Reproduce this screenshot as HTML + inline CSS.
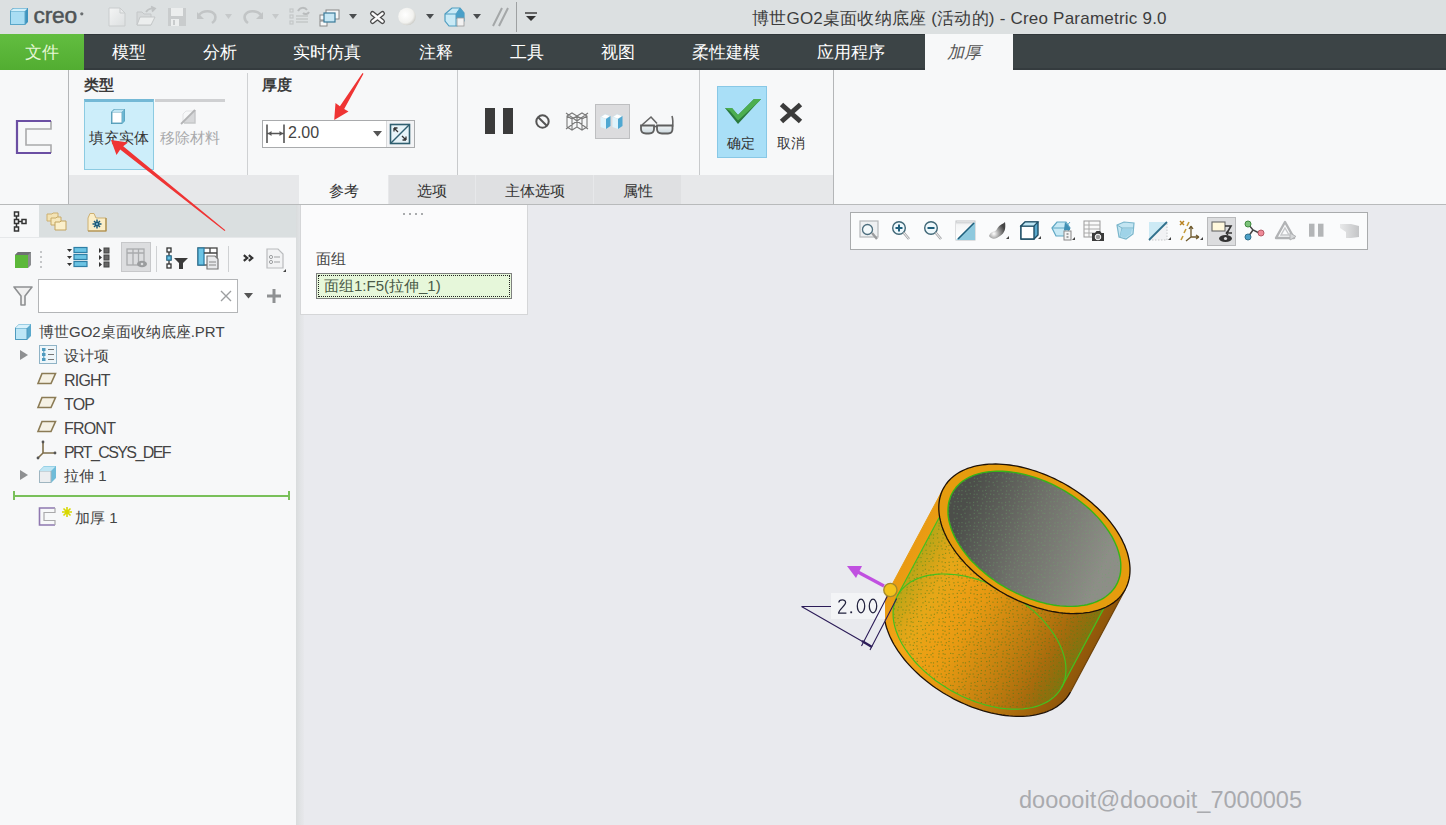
<!DOCTYPE html>
<html><head><meta charset="utf-8">
<style>
*{margin:0;padding:0;box-sizing:border-box}
html,body{width:1446px;height:825px;overflow:hidden;background:#e9eaee;font-family:"Liberation Sans",sans-serif;color:#333}
.a{position:absolute}
svg{position:absolute;overflow:visible}
#title{left:0;top:0;width:1446px;height:34px;background:#dce0e1}
#menu{left:0;top:34px;width:1446px;height:36px;background:#3c4446}
.mt{position:absolute;top:0;height:36px;line-height:37px;font-size:17px;color:#fff;white-space:nowrap}
#ribbon{left:0;top:70px;width:1446px;height:135px;background:#f7f8f9}
#left{left:0;top:205px;width:296px;height:620px;background:#f7f8f9}
.tx{position:absolute;white-space:nowrap;font-size:14px;color:#3a3a3a}
.tab{position:absolute;top:105px;height:29px;line-height:31px;text-align:center;font-size:15px;color:#333;background:#dfe0e2}
</style></head>
<body>
<!-- TITLE BAR -->
<div id="title" class="a">
  <div class="tx" style="left:752px;top:8px;font-size:17px;color:#3d3d3d;line-height:22px;letter-spacing:0.22px">博世GO2桌面收纳底座 (活动的) - Creo Parametric 9.0</div>
</div>
<!-- title toolbar -->
<svg width="560" height="34" style="left:0;top:0">
 <defs>
  <linearGradient id="gdoc" x1="0" y1="0" x2="1" y2="1"><stop offset="0" stop-color="#f4f5f5"/><stop offset="1" stop-color="#dcdfe0"/></linearGradient>
 </defs>
 <!-- creo cube -->
 <path d="M10,11 L13,8 H28 V22 L25,25 H10 Z" fill="#3e94bf"/>
 <path d="M10.5,11 H25 V24.5 H10.5 Z" fill="#a9ddf3" stroke="#5aa6c8" stroke-width="1"/>
 <path d="M10.5,11 L13.5,8.5 H27.5 L25,11 Z" fill="#d2effa"/>
 <text x="33.5" y="23.2" font-family="Liberation Sans" font-size="22.7" fill="#4f5456" stroke="#4f5456" stroke-width="0.5" letter-spacing="-0.2">creo</text>
 <circle cx="81.8" cy="13.8" r="1.6" fill="#6a6e70"/>
 <!-- new -->
 <path d="M109,8 H120 L125,13 V26 H109 Z" fill="url(#gdoc)" stroke="#c9cccd" stroke-width="1"/>
 <path d="M120,8 V13 H125" fill="none" stroke="#c9cccd" stroke-width="1"/>
 <!-- open -->
 <path d="M137,12 H142 L144,14 H151 V25 H137 Z" fill="#d6d9da" stroke="#c4c7c8" stroke-width="1"/>
 <path d="M137,25 L140,17 H155 L151,25 Z" fill="#eceeee" stroke="#c4c7c8" stroke-width="1"/>
 <path d="M146,12 C148,9 151,8 153,9 M151,6.5 L155,8.5 L152,11.5" fill="none" stroke="#c0c3c4" stroke-width="1.8"/>
 <!-- save -->
 <rect x="168" y="8" width="18" height="18" fill="#c9cccd"/>
 <rect x="171" y="8" width="12" height="8" fill="#eceeee"/>
 <rect x="171" y="19" width="8" height="7" fill="#eceeee"/>
 <rect x="173" y="20" width="2" height="5" fill="#c9cccd"/>
 <!-- undo -->
 <path d="M199,15 C203,10 212,10 215,15 C216,18 215,21 212,23" fill="none" stroke="#c2c5c6" stroke-width="2.6"/>
 <path d="M197,12 L197,19 L204,19 Z" fill="#c2c5c6"/>
 <path d="M225,14 H232 L228.5,19 Z" fill="#c6c9ca"/>
 <!-- redo -->
 <path d="M261,15 C257,10 248,10 245,15 C244,18 245,21 248,23" fill="none" stroke="#c2c5c6" stroke-width="2.6"/>
 <path d="M263,12 L263,19 L256,19 Z" fill="#c2c5c6"/>
 <path d="M272,14 H279 L275.5,19 Z" fill="#c6c9ca"/>
 <!-- regen -->
 <g fill="none" stroke="#c4c7c8" stroke-width="1.2"><rect x="290" y="9" width="3" height="3"/><rect x="290" y="15" width="3" height="3"/><rect x="290" y="21" width="3" height="3"/></g>
 <path d="M296,16 H308 M296,19 H308 M296,22 H308" stroke="#c4c7c8" stroke-width="1.4"/>
 <path d="M298,11 C300,7 305,7 307,10 M303,13 C305,15 308,14 309,12" fill="none" stroke="#b9bcbd" stroke-width="2"/>
 <!-- windows -->
 <rect x="320" y="15" width="7" height="5" fill="#f6f7f7" stroke="#888" stroke-width="1"/>
 <rect x="320" y="21" width="7" height="5" fill="#f6f7f7" stroke="#888" stroke-width="1"/>
 <rect x="326" y="10" width="13" height="9" fill="#f6f7f7" stroke="#888" stroke-width="1"/>
 <rect x="324" y="13" width="11" height="9" fill="#c7e7f4" stroke="#3a7a98" stroke-width="1.2"/>
 <path d="M349,14 H357 L353,19 Z" fill="#4a4d4f"/>
 <!-- close X -->
 <path d="M372.5,13.5 L382.5,21.5 M382.5,13.5 L372.5,21.5" stroke="#4a4a4a" stroke-width="5" stroke-linecap="round"/>
 <path d="M372.5,13.5 L382.5,21.5 M382.5,13.5 L372.5,21.5" stroke="#fbfbfb" stroke-width="2.4" stroke-linecap="round"/>
 <!-- sphere -->
 <defs><radialGradient id="gsph" cx="0.4" cy="0.4" r="0.65"><stop offset="0" stop-color="#ffffff"/><stop offset="0.7" stop-color="#f2f2ef"/><stop offset="1" stop-color="#c9c9c4"/></radialGradient></defs>
 <circle cx="407" cy="16.5" r="8.8" fill="url(#gsph)"/>
 <path d="M426,14 H434 L430,19 Z" fill="#4a4d4f"/>
 <!-- display cube -->
 <path d="M445,14 L452,8 H460 L464,13 V21 L457,26 H449 L445,21 Z" fill="#c9eaf6" stroke="#4f9dc0" stroke-width="1.2"/>
 <path d="M445,14 H456 L460,8 M456,14 V26" fill="none" stroke="#4f9dc0" stroke-width="1"/>
 <path d="M456,14 L460,8 L464,13 V19 H456 Z" fill="#4aa0c8"/>
 <rect x="457" y="18" width="7" height="8" fill="#f2f2f2" stroke="#999" stroke-width="0.8"/>
 <path d="M473,14 H481 L477,19 Z" fill="#4a4d4f"/>
 <!-- // -->
 <path d="M493,26 L502,8 M499,26 L508,8" stroke="#a4a7a8" stroke-width="2"/>
 <path d="M516.5,2 V32" stroke="#9ea1a2" stroke-width="1"/>
 <path d="M525,13 H537" stroke="#333" stroke-width="1.4"/>
 <path d="M526,16 H536 L531,21 Z" fill="#333"/>
</svg>
<!-- MENU -->
<div id="menu" class="a">
  <div class="a" style="left:0;top:0;width:84px;height:36px;background:linear-gradient(#62bd40,#52ad31)"></div>
  <div class="a" style="left:84px;top:0;width:1362px;height:1px;background:#30373a"></div>
  <div class="a" style="left:84px;top:34px;width:841px;height:2px;background:#343b3e"></div>
  <div class="a" style="left:1013px;top:34px;width:433px;height:2px;background:#343b3e"></div>
  <div class="mt" style="left:25px;color:#e6f7d6">文件</div>
  <div class="mt" style="left:112px">模型</div>
  <div class="mt" style="left:203px">分析</div>
  <div class="mt" style="left:293px">实时仿真</div>
  <div class="mt" style="left:419px">注释</div>
  <div class="mt" style="left:510px">工具</div>
  <div class="mt" style="left:601px">视图</div>
  <div class="mt" style="left:692px">柔性建模</div>
  <div class="mt" style="left:817px">应用程序</div>
  <div class="a" style="left:925px;top:0;width:88px;height:36px;background:#f7f8f9"></div>
  <div class="mt" style="left:947px;color:#555;font-style:italic">加厚</div>
</div>
<!-- RIBBON -->
<div id="ribbon" class="a">
  <div class="a" style="left:68px;top:0;width:1px;height:135px;background:#b4b6b8"></div>
  <!-- thicken big icon -->
  <svg width="70" height="70" style="left:0;top:30px">
    <path d="M51,21 V29 H26 V45 H51 V53" fill="none" stroke="#a9a9ab" stroke-width="1.6"/>
    <path d="M51,21 H17 V53 H51" fill="none" stroke="#6b4fa3" stroke-width="2.2"/>
  </svg>
  <div class="tx" style="left:84px;top:6px;font-weight:bold;color:#3a3a3a;font-size:15px">类型</div>
  <!-- fill solid button -->
  <div class="a" style="left:84px;top:29px;width:70px;height:71px;background:#cdeefa;border:1px solid #8ccbe2;border-top:3px solid #74b9d6"></div>
  <svg width="20" height="20" style="left:108px;top:37px">
    <path d="M3,5 L6,2 H17 V14 L14,17 H3 Z" fill="#4d9bb8"/>
    <path d="M4,5 H14 V16 H4 Z" fill="#fff" stroke="#6aa9c2" stroke-width="1"/>
    <path d="M4,5 L6.5,2.5 H16.5 L14,5 Z" fill="#bfe4f2"/>
    <path d="M14,5 L16.5,2.5 V14 L14,16.5 Z" fill="#6cb6d1"/>
  </svg>
  <div class="tx" style="left:89px;top:59px;font-size:15px;color:#333">填充实体</div>
  <!-- remove material -->
  <div class="a" style="left:155px;top:29px;width:70px;height:3px;background:#cfd0d2"></div>
  <svg width="22" height="22" style="left:178px;top:35px">
    <path d="M5,18 L17,6 V18 Z" fill="#d7d8da"/>
    <path d="M5,18 V9 L8,6 H17" fill="none" stroke="#e2e3e5" stroke-width="1"/>
    <path d="M17,5 V18 H6" fill="none" stroke="#c6c7c9" stroke-width="1.4"/>
    <path d="M3,19 L17,5" stroke="#b3b4b6" stroke-width="1.8"/>
  </svg>
  <div class="tx" style="left:160px;top:59px;font-size:15px;color:#a9aaac">移除材料</div>
  <div class="a" style="left:247px;top:3px;width:1px;height:102px;background:#cfd1d3"></div>
  <!-- thickness -->
  <div class="tx" style="left:262px;top:6px;font-weight:bold;color:#3a3a3a;font-size:15px">厚度</div>
  <div class="a" style="left:262px;top:50px;width:153px;height:28px;background:#fff;border:1px solid #a9abad"></div>
  <div class="a" style="left:386px;top:51px;width:1px;height:26px;background:#d8d9db"></div>
  <div class="a" style="left:387px;top:51px;width:27px;height:26px;background:#f3f4f6"></div>
  <svg width="30" height="30" style="left:262px;top:50px">
    <path d="M5,4.5 V23 M22,4.5 V23 M5,13.5 H22" fill="none" stroke="#555" stroke-width="1.6"/><path d="M6,13.5 L9.5,11 V16 Z M21,13.5 L17.5,11 V16 Z" fill="#555"/>
  </svg>
  <div class="tx" style="left:288px;top:54px;font-size:16px;color:#444">2.00</div>
  <svg width="12" height="8" style="left:373px;top:61px"><path d="M0,0 H9 L4.5,5.5 Z" fill="#555"/></svg>
  <svg width="24" height="24" style="left:389px;top:52px">
    <rect x="1.5" y="2.5" width="19" height="19" fill="#e6f3f8" stroke="#2f5f70" stroke-width="1.6"/>
    <path d="M2,21 L20,3" stroke="#2f5f70" stroke-width="1.4"/>
    <path d="M5,6 L9,10 M5,6 H8.5 M5,6 V9.5 M17,18 L13,14 M17,18 H13.5 M17,18 V14.5" stroke="#333" stroke-width="1.3" fill="none"/>
  </svg>
  <div class="a" style="left:457px;top:0;width:1px;height:105px;background:#c8cacc"></div>
  <!-- pause etc -->
  <div class="a" style="left:485px;top:38px;width:10px;height:26px;background:#3b3b3b"></div>
  <div class="a" style="left:503px;top:38px;width:10px;height:26px;background:#3b3b3b"></div>
  <svg width="20" height="20" style="left:533px;top:42px">
    <circle cx="9.5" cy="9.5" r="6.2" fill="none" stroke="#555" stroke-width="2"/>
    <path d="M5.2,5.2 L13.8,13.8" stroke="#555" stroke-width="2"/>
  </svg>
  <svg width="28" height="24" style="left:563px;top:40px">
    <path d="M4,6 L9,3 L14,6 V17 L9,20 L4,17 Z M9,8 V20 M4,6 L9,9 L14,6 M14,6 L19,3 L24,6 V17 L19,20 L14,17 M19,8 V20 M14,6 L19,9 L24,6 M3,3 L25,19 M25,3 L3,19" fill="none" stroke="#7a7a7a" stroke-width="1.1"/>
  </svg>
  <div class="a" style="left:595px;top:34px;width:35px;height:35px;background:#dcdcde;border:1px solid #bebfc1"></div>
  <svg width="30" height="24" style="left:599px;top:42px">
    <g>
      <path d="M1.5,5 L6,2 L11.5,4 L7,7 Z" fill="#ffffff" stroke="#c9dde6" stroke-width="0.6"/>
      <path d="M1.5,5 L7,7 V17 L1.5,15 Z" fill="#dff3fb"/>
      <path d="M7,7 L11.5,4 V14 L7,17 Z" fill="#4fa8d2"/>
      <path d="M13.5,5 L18,2 L23.5,4 L19,7 Z" fill="#ffffff" stroke="#c9dde6" stroke-width="0.6"/>
      <path d="M13.5,5 L19,7 V17 L13.5,15 Z" fill="#dff3fb"/>
      <path d="M19,7 L23.5,4 V14 L19,17 Z" fill="#4fa8d2"/>
    </g>
  </svg>
  <svg width="40" height="24" style="left:638px;top:44px">
    <defs><linearGradient id="glens" x1="0" y1="0" x2="0" y2="1"><stop offset="0" stop-color="#f4f6f7"/><stop offset="1" stop-color="#c9d6dc"/></linearGradient></defs>
    <path d="M4,11 L13,3 L19,9.5" fill="none" stroke="#666" stroke-width="1.6"/>
    <path d="M34,2 C35,5 35,9 34.5,13" fill="none" stroke="#666" stroke-width="1.6"/>
    <path d="M3,11.5 H16 V15 C16,18 14,19.5 11,19.5 H8 C5,19.5 3,18 3,15 Z" fill="url(#glens)" stroke="#5f5f5f" stroke-width="1.8"/>
    <path d="M19,11.5 H34.5 V15 C34.5,18 33,19.5 30,19.5 H24 C21,19.5 19,18 19,15 Z" fill="url(#glens)" stroke="#5f5f5f" stroke-width="1.8"/>
    <path d="M16,12.5 H19" stroke="#5f5f5f" stroke-width="1.6"/>
  </svg>
  <div class="a" style="left:699px;top:0;width:1px;height:105px;background:#c8cacc"></div>
  <!-- OK / Cancel -->
  <div class="a" style="left:717px;top:16px;width:50px;height:72px;background:#a9dff7;border:1px solid #88c8e6"></div>
    <svg width="40" height="30" style="left:722px;top:25px">
    <path d="M3,13 L10,13 L16,20 L32,4 L39,4 L16,29 Z" fill="#2a7a3e"/>
    <path d="M3,13 L10,13 L16,20 L32,4 L39,4 L37,6.5 L16,25.5 L8,16 Z" fill="#4cae50"/>
  </svg>
  <div class="tx" style="left:727px;top:65px;font-size:14px;color:#333">确定</div>
  <svg width="30" height="30" style="left:777px;top:30px">
    <path d="M4.5,4.5 L23.5,21.5 M23.5,4.5 L4.5,21.5" stroke="#3b3b3b" stroke-width="5"/>
  </svg>
  <div class="tx" style="left:777px;top:65px;font-size:14px;color:#333">取消</div>
  <div class="a" style="left:833px;top:0;width:1px;height:135px;background:#b4b6b8"></div>
  <!-- bottom band -->
  <div class="a" style="left:69px;top:105px;width:764px;height:29px;background:#e7e8ea"></div>
  <div class="tab" style="left:299px;width:89px;background:#f7f8f9">参考</div>
  <div class="tab" style="left:389px;width:86px">选项</div>
  <div class="tab" style="left:476px;width:117px">主体选项</div>
  <div class="tab" style="left:594px;width:87px">属性</div>
  <div class="a" style="left:0;top:134px;width:1446px;height:1px;background:#b8babb"></div>
</div>
<!-- LEFT PANEL -->
<div id="left" class="a">
  <!-- tab strip y 205..237 -->
  <div class="a" style="left:39px;top:0;width:257px;height:32px;background:#dadfe0"></div>
  <div class="a" style="left:0;top:32px;width:296px;height:1px;background:#e6e8ea"></div>
  <svg width="30" height="30" style="left:8px;top:4px">
    <g fill="none" stroke="#333" stroke-width="1.5">
      <rect x="6.5" y="3" width="4" height="4"/><rect x="6.5" y="10.5" width="4" height="4"/><rect x="6.5" y="18" width="4" height="4"/><rect x="14" y="10.5" width="4" height="4"/>
      <path d="M8.5,7 V10.5 M8.5,14.5 V18 M10.5,12.5 H14"/>
    </g>
  </svg>
  <svg width="30" height="30" style="left:44px;top:4px">
    <path d="M3,5 H8 L9,4 H14 V12 H3 Z" fill="#f3e3b5" stroke="#cdb070" stroke-width="1"/>
    <path d="M7,9 H12 L13,8 H17 V16 H7 Z" fill="#f6e8bd" stroke="#c8aa66" stroke-width="1"/>
    <path d="M11,13 H16 L17,12 H22 V21 H11 Z" fill="#fbf0cc" stroke="#c2a35e" stroke-width="1"/>
  </svg>
  <svg width="30" height="30" style="left:84px;top:4px">
    <path d="M4,9 L6,4.5 H10 L12,9 H22 V22 H4 Z" fill="#fbeec8" stroke="#cdb072" stroke-width="1"/>
    <path d="M4,22 H22 V9" fill="none" stroke="#a88a4a" stroke-width="1.2"/>
    <path d="M13,10.5 V19.5 M8.5,15 H17.5 M10,12 L16,18 M16,12 L10,18" stroke="#1a5a7a" stroke-width="1.5"/>
    <circle cx="13" cy="15" r="2.2" fill="#1a5a7a"/><circle cx="13" cy="15" r="0.9" fill="#9fd0e8"/>
  </svg>
  <!-- toolbar y 237..272 -->
  <svg width="24" height="24" style="left:12px;top:44px">
    <path d="M3,6 L6,3 H19 V16 L16,19 H3 Z" fill="#8a8c8e"/>
    <path d="M3,6 H16 V19 H3 Z" fill="#5cb83a"/>
    <path d="M3,6 L6,3 H19 L16,6 Z" fill="#6f7173"/>
  </svg>
  <svg width="8" height="24" style="left:38px;top:44px"><g fill="#c4c6c8"><rect x="2" y="2" width="2" height="2"/><rect x="2" y="7" width="2" height="2"/><rect x="2" y="12" width="2" height="2"/><rect x="2" y="17" width="2" height="2"/></g></svg>
  <svg width="26" height="26" style="left:64px;top:39px">
    <g fill="#333"><path d="M3,5 H8 L5.5,8 Z"/><path d="M3,12 H8 L5.5,15 Z"/><path d="M3,19 H8 L5.5,22 Z"/></g>
    <g fill="#6cc4e4" stroke="#2e7fa6" stroke-width="1.2"><rect x="10" y="3.5" width="13" height="5"/><rect x="10" y="10.5" width="13" height="5"/><rect x="10" y="17.5" width="13" height="5"/></g>
  </svg>
  <svg width="20" height="26" style="left:96px;top:39px">
    <g fill="#333"><path d="M3,4 V9 L6,6.5 Z"/><path d="M3,11 V16 L6,13.5 Z"/><path d="M3,18 V23 L6,20.5 Z"/></g>
    <g fill="#666" stroke="#444" stroke-width="1"><rect x="8" y="4" width="5" height="5"/><rect x="8" y="11" width="5" height="5"/><rect x="8" y="18" width="5" height="5"/></g>
  </svg>
  <div class="a" style="left:121px;top:37px;width:30px;height:30px;background:#dcdddf;border:1px solid #c7c8ca"></div>
  <svg width="26" height="26" style="left:124px;top:40px">
    <g fill="none" stroke="#a9abad" stroke-width="1.3"><rect x="3" y="4" width="17" height="16"/><path d="M3,8 H20 M9,4 V20 M14.5,4 V20"/></g>
    <ellipse cx="18" cy="19" rx="5" ry="3.2" fill="#9a9c9e"/><circle cx="18" cy="19" r="1.3" fill="#dcdddf"/>
  </svg>
  <div class="a" style="left:156px;top:41px;width:1px;height:26px;background:#cfd1d3"></div>
  <svg width="28" height="26" style="left:164px;top:40px">
    <g fill="none" stroke="#333" stroke-width="1.3"><rect x="3" y="3" width="4" height="4"/><rect x="3" y="11" width="4" height="4"/><rect x="3" y="19" width="4" height="4"/><path d="M5,7 V11 M5,15 V19"/></g>
    <rect x="3" y="11" width="4" height="4" fill="#6cc4e4" stroke="#2e7fa6" stroke-width="1.2"/>
    <path d="M10,13 H24 L19,18 V24 H15 V18 Z" fill="#3a3a3a"/>
  </svg>
  <svg width="26" height="26" style="left:196px;top:40px">
    <rect x="2" y="3" width="19" height="17" fill="#fff" stroke="#444" stroke-width="1.3"/>
    <rect x="2" y="3" width="6" height="17" fill="#6cc4e4" stroke="#2e7fa6" stroke-width="1.3"/>
    <path d="M8,8 H21 M14,3 V8" stroke="#444" stroke-width="1.3"/>
    <path d="M11,11 H19 L22,14 V24 H11 Z" fill="#e8e9eb" stroke="#777" stroke-width="1.2"/>
    <path d="M13,17 H20 M13,20 H20" stroke="#888" stroke-width="1"/>
  </svg>
  <div class="a" style="left:228px;top:41px;width:1px;height:26px;background:#cfd1d3"></div>
  <svg width="14" height="12" style="left:242px;top:49px"><path d="M1.8,1.2 L5.2,4 L1.8,6.8 M6.8,1.2 L10.2,4 L6.8,6.8" fill="none" stroke="#333" stroke-width="2.2"/></svg>
  <svg width="26" height="28" style="left:264px;top:41px">
    <path d="M3,3 H14 L19,8 V22 H3 Z" fill="#f2f3f4" stroke="#b9bbbd" stroke-width="1.2"/>
    <g fill="none" stroke="#9fa1a3" stroke-width="1"><circle cx="7" cy="11" r="1.6"/><circle cx="7" cy="16" r="1.6"/><path d="M10,11 H16 M10,16 H16"/></g>
    <path d="M22,23 L19,26 H22 Z" fill="#444"/>
  </svg>
  <!-- filter -->
  <svg width="26" height="26" style="left:12px;top:78px">
    <path d="M2,4 H20 L13,13 V22 H9 V13 Z" fill="#f0f0f0" stroke="#8e9092" stroke-width="1.6" stroke-linejoin="round"/>
  </svg>
  <div class="a" style="left:38px;top:74px;width:200px;height:34px;background:#fff;border:1px solid #b3b5b7"></div>
  <svg width="14" height="14" style="left:219px;top:84px"><path d="M2,2 L12,12 M12,2 L2,12" stroke="#9c9ea0" stroke-width="1.4"/></svg>
  <svg width="12" height="8" style="left:244px;top:88px"><path d="M0,0 H9 L4.5,5.5 Z" fill="#555"/></svg>
  <svg width="18" height="18" style="left:266px;top:83px"><path d="M8,1 V15 M1,8 H15" stroke="#8f9193" stroke-width="3"/></svg>
  <!-- tree -->
  <svg width="20" height="20" style="left:13px;top:117px">
    <path d="M2,6 L6,2 H18 V14 L14,18 H2 Z" fill="#5aa9cc"/>
    <path d="M2.5,6 H14 V17.5 H2.5 Z" fill="#bde6f6" stroke="#4f9bbf" stroke-width="1"/>
    <path d="M2.5,6 L6,2.5 H17.5 L14,6 Z" fill="#d8f1fb"/>
  </svg>
  <div class="tx" style="left:39px;top:118px;font-size:15px;color:#444">博世GO2桌面收纳底座.PRT</div>
  <svg width="12" height="14" style="left:18px;top:144px"><path d="M2,1 V11 L10,6 Z" fill="#8e9092"/></svg>
  <svg width="20" height="22" style="left:38px;top:139px">
    <rect x="1.5" y="1.5" width="17" height="18" fill="#eef6fa" stroke="#8fb3c6" stroke-width="1"/>
    <g fill="#4f9bbf"><rect x="4" y="4" width="3.5" height="3"/><rect x="4" y="9" width="3.5" height="3"/><rect x="4" y="14" width="3.5" height="3"/></g>
    <path d="M5.8,7 V14" stroke="#4f9bbf" stroke-width="1"/>
    <path d="M10,5.5 H16 M10,10.5 H16 M10,15.5 H16" stroke="#777" stroke-width="1"/>
  </svg>
  <div class="tx" style="left:64px;top:142px;font-size:15px;color:#444">设计项</div>
  <svg width="22" height="16" style="left:36px;top:166px"><path d="M6,2.5 H19.5 L15,12.5 H2 Z" fill="#f5f1e4" stroke="#8b7b55" stroke-width="1.6"/></svg>
  <div class="tx" style="left:64px;top:167px;font-size:16px;letter-spacing:-0.8px;color:#444">RIGHT</div>
  <svg width="22" height="16" style="left:36px;top:190px"><path d="M6,2.5 H19.5 L15,12.5 H2 Z" fill="#f5f1e4" stroke="#8b7b55" stroke-width="1.6"/></svg>
  <div class="tx" style="left:64px;top:191px;font-size:16px;letter-spacing:-0.8px;color:#444">TOP</div>
  <svg width="22" height="16" style="left:36px;top:214px"><path d="M6,2.5 H19.5 L15,12.5 H2 Z" fill="#f5f1e4" stroke="#8b7b55" stroke-width="1.6"/></svg>
  <div class="tx" style="left:64px;top:215px;font-size:16px;letter-spacing:-0.8px;color:#444">FRONT</div>
  <svg width="22" height="22" style="left:36px;top:234px">
    <path d="M7,3 V14 L2,19 M7,14 H19" fill="none" stroke="#7f6f4c" stroke-width="1.6"/>
    <circle cx="7" cy="3" r="1.4" fill="#555"/><circle cx="19" cy="14" r="1.4" fill="#555"/><circle cx="2" cy="19" r="1.4" fill="#555"/>
  </svg>
  <div class="tx" style="left:64px;top:239px;font-size:16px;letter-spacing:-1.6px;color:#444">PRT_CSYS_DEF</div>
  <svg width="12" height="14" style="left:18px;top:264px"><path d="M2,1 V11 L10,6 Z" fill="#8e9092"/></svg>
  <svg width="22" height="22" style="left:37px;top:259px">
    <path d="M2,7 L7,2 H19 V14 L14,19 H2 Z" fill="#6fbcd9"/>
    <path d="M2.5,7 H14 V18.5 H2.5 Z" fill="#eceef0" stroke="#9fb5c0" stroke-width="1"/>
    <path d="M2.5,7 L7,2.5 H18.5 L14,7 Z" fill="#bfe6f4"/>
  </svg>
  <div class="tx" style="left:64px;top:262px;font-size:15px;color:#444">拉伸 1</div>
  <div class="a" style="left:13px;top:290px;width:277px;height:1.5px;background:#79c05a"></div>
  <div class="a" style="left:13px;top:286px;width:1.5px;height:9px;background:#79c05a"></div>
  <div class="a" style="left:288px;top:286px;width:1.5px;height:9px;background:#79c05a"></div>
  <svg width="22" height="22" style="left:37px;top:301px">
    <path d="M18,2 H2.5 V19 H18" fill="none" stroke="#8f78b0" stroke-width="1.6"/>
    <path d="M18,2 V6.5 H7 V14.5 H18 V19" fill="none" stroke="#a9a9ab" stroke-width="1.2"/>
  </svg>
  <svg width="12" height="12" style="left:62px;top:302px"><path d="M5,0 V10 M0,5 H10 M1.5,1.5 L8.5,8.5 M8.5,1.5 L1.5,8.5" stroke="#d8d800" stroke-width="1.6"/></svg>
  <div class="tx" style="left:75px;top:304px;font-size:15px;color:#444">加厚 1</div>
</div>
<div class="a" style="left:296px;top:205px;width:8px;height:620px;background:linear-gradient(90deg,#d9dcdd,#e1e3e5 50%,#e7e8eb)"></div>
<!-- GRAPHICS -->
<!-- ref panel -->
<div class="a" style="left:300px;top:205px;width:228px;height:110px;background:#fbfbfc;border:1px solid #d5d6d8;border-top:none"></div>
<div class="a" style="left:403px;top:213px;width:22px;height:2px;background:repeating-linear-gradient(90deg,#a9abad 0 2px,transparent 2px 6px)"></div>
<div class="tx" style="left:316px;top:250px;font-size:15px;color:#444">面组</div>
<div class="a" style="left:316px;top:273px;width:196px;height:26px;background:#e6f7da;border:1px solid #7f8080"></div>
<div class="a" style="left:318px;top:275px;width:192px;height:22px;border:1px dotted #222"></div>
<div class="tx" style="left:324px;top:277px;font-size:15px;color:#4a5a48">面组1:F5(拉伸_1)</div>
<!-- view toolbar -->
<div class="a" style="left:850px;top:212px;width:518px;height:38px;background:#fafbfc;border:1px solid #a9abad"></div>
<!-- view toolbar icons; centers x=869+32k, y=231 -->
<svg width="520" height="36" style="left:850px;top:213px">
 <g transform="translate(9,7)">
  <rect x="1" y="1" width="18" height="16" fill="#eef0f2" stroke="#b5b7b9" stroke-width="1.2"/>
  <circle cx="8.5" cy="9.5" r="5" fill="#f3f9fb" stroke="#4c6e7e" stroke-width="1.3"/>
  <path d="M13,13 L18,19" stroke="#9a9c9e" stroke-width="2.4"/>
 </g>
 <g transform="translate(41,7)">
  <circle cx="8" cy="8" r="6.3" fill="#eef8fc" stroke="#3f6676" stroke-width="1.4"/>
  <path d="M8,4.5 V11.5 M4.5,8 H11.5" stroke="#1f5f7c" stroke-width="2"/>
  <path d="M12.5,12.5 L18,19" stroke="#a5a7a9" stroke-width="2.6"/><path d="M12.8,12.8 L17.7,18.7" stroke="#f4f5f6" stroke-width="1"/>
 </g>
 <g transform="translate(73,7)">
  <circle cx="8" cy="8" r="6.3" fill="#eef8fc" stroke="#3f6676" stroke-width="1.4"/>
  <path d="M4.5,8 H11.5" stroke="#1f5f7c" stroke-width="2"/>
  <path d="M12.5,12.5 L18,19" stroke="#a5a7a9" stroke-width="2.6"/><path d="M12.8,12.8 L17.7,18.7" stroke="#f4f5f6" stroke-width="1"/>
 </g>
 <g transform="translate(105,7)">
  <rect x="1" y="1" width="19" height="19" fill="#fff" stroke="#c0c2c4" stroke-width="1"/>
  <path d="M1,2 H20 V20 H1 Z" fill="url(#gsq)"/>
  <path d="M1,20 L20,2 V20 Z" fill="#8ec9de"/>
  <path d="M3,19 L19,3" stroke="#1f5f7c" stroke-width="1.6"/>
 </g>
 <g transform="translate(137,7)">
  <path d="M2,16 C4,10 8,13 10,9 C12,5 16,4 18,2 C19,8 18,13 13,16 C9,19 5,20 2,16 Z" fill="url(#gsh)"/>
  <path d="M19,19 L22,16 V19 Z" fill="#444"/>
 </g>
 <g transform="translate(169,7)">
  <path d="M2,6 L6,2 H19 V15 L15,19 H2 Z" fill="#5aa9cc" stroke="#1f4f66" stroke-width="1.4" stroke-linejoin="round"/>
  <path d="M2,6 H15 V19 H2 Z" fill="#fff" stroke="#1f4f66" stroke-width="1.4"/>
  <path d="M2,6 L6,2 H19 L15,6 Z" fill="#bfe6f4" stroke="#1f4f66" stroke-width="1.2"/>
  <path d="M19,19 L22,16 V19 Z" fill="#444"/>
 </g>
 <g transform="translate(201,7)">
  <path d="M1,8 L6,2 H15 L19,8 L14,16 H5 Z" fill="#c7e9f5" stroke="#5fa7c4" stroke-width="1.2"/>
  <path d="M1,8 H14 L19,2 M14,8 V16" stroke="#5fa7c4" stroke-width="1" fill="none"/>
  <path d="M14,2 L19,8 V10 H13 Z" fill="#3f8fb4"/>
  <rect x="13" y="11" width="7" height="9" fill="#f4f4f4" stroke="#888" stroke-width="1"/>
  <path d="M15.5,14 H17.5 M15.5,17 H17.5" stroke="#555" stroke-width="1"/>
  <path d="M21,20 L24,17 V20 Z" fill="#444"/>
 </g>
 <g transform="translate(233,7)">
  <rect x="1" y="1" width="16" height="16" fill="#fafafa" stroke="#999" stroke-width="1"/>
  <path d="M1,5 H17 M1,9 H17 M1,13 H13 M6,1 V17" stroke="#aaa" stroke-width="1"/>
  <path d="M9,13 H12 L13.5,11 H17 L18.5,13 H21 V21 H9 Z" fill="#3a3a3a"/>
  <circle cx="15" cy="17" r="2.8" fill="#999" stroke="#fff" stroke-width="1"/>
 </g>
 <g transform="translate(265,7)">
  <path d="M2,5 L9,2 L19,3 L18,14 L11,19 L4,17 Z" fill="#c3e5f2" stroke="#7ab6cc" stroke-width="1.2"/>
  <path d="M2,5 L7,8 L18,8 M7,8 L5,17 M7,8 V8" stroke="#7ab6cc" stroke-width="1" fill="none"/>
  <path d="M7,9 L17,9 L16,14 L10,18 L5,16 Z" fill="#9fd3e8"/>
 </g>
 <g transform="translate(297,7)">
  <path d="M2,20 L20,2 V20 Z" fill="#f1f2f4" stroke="#c5c7c9" stroke-width="1" stroke-dasharray="1.5,1.5"/>
  <path d="M2,20 V2 H20 Z" fill="#cdeaf5"/>
  <path d="M2,20 L20,2" stroke="#2f6f8c" stroke-width="1.8"/>
  <path d="M21,20 L24,17 V20 Z" fill="#444"/>
 </g>
 <g transform="translate(329,7)">
  <path d="M1,1 L5,5 M5,1 L1,5" stroke="#b8811f" stroke-width="1.5"/>
  <path d="M10,2 L8,6 M7,9 L5,13 M4,16 L2,20" stroke="#c49a3a" stroke-width="1.6"/>
  <path d="M12,6 V17 H20 M12,6 L10,9 M12,6 L14,9 M20,17 L17,15 M20,17 L17,19 M12,17 L7,21" stroke="#6f5a2e" stroke-width="1.3" fill="none"/>
  <path d="M21,20 L24,17 V20 Z" fill="#444"/>
 </g>
 <rect x="357.5" y="4.5" width="28" height="28" fill="#dcdddf" stroke="#b9babc" stroke-width="1"/>
 <g transform="translate(361,8)">
  <rect x="1" y="1" width="13" height="9" fill="#fff8dc" stroke="#666" stroke-width="1.1"/>
  <path d="M14,5 H20 L16,12 H21" stroke="#333" stroke-width="1.6" fill="none"/>
  <path d="M15,12 L17,10 M15,12 L17,14" stroke="#333" stroke-width="1.2"/>
  <ellipse cx="14.5" cy="17.5" rx="6.5" ry="3.5" fill="#333"/>
  <circle cx="14.5" cy="17.5" r="1.6" fill="#dcdddf"/>
 </g>
 <g transform="translate(393,7)">
  <path d="M5,4 L10,10 L18,14 M10,10 L5,17" stroke="#444" stroke-width="1.5" fill="none"/>
  <circle cx="5" cy="4" r="3" fill="#7cc27a" stroke="#3f8a3f" stroke-width="1"/>
  <circle cx="18" cy="13" r="3" fill="#ef8a98" stroke="#b55a66" stroke-width="1"/>
  <circle cx="5" cy="17" r="3" fill="#4b9fc6" stroke="#2f6f8c" stroke-width="1"/>
 </g>
 <g transform="translate(425,7)">
  <path d="M10,2 L19,18 H1 Z" fill="none" stroke="#b1b3b5" stroke-width="2.4" stroke-linejoin="round"/>
  <path d="M10,8 L14,15 H6 Z" fill="none" stroke="#c5c7c9" stroke-width="1.4"/>
  <path d="M15,13 L21,16.5 L15,20 Z" fill="#d5d7d9" stroke="#b1b3b5" stroke-width="1"/>
 </g>
 <g transform="translate(457,7)">
  <rect x="2" y="3.7" width="5.5" height="13" fill="#b3b5b7"/><rect x="11" y="3.7" width="5.5" height="13" fill="#b3b5b7"/>
 </g>
 <g transform="translate(489,7)">
  <path d="M1,4 H12 L20,6 V17 L12,18 H7 V12 L1,8 Z" fill="url(#gpl)"/>
 </g>
 <defs>
  <linearGradient id="gsq" x1="0" y1="0" x2="0" y2="1"><stop offset="0" stop-color="#cfd1d3"/><stop offset="0.15" stop-color="#f4f5f6"/><stop offset="1" stop-color="#fff"/></linearGradient>
  <radialGradient id="gsh" cx="0.3" cy="0.7" r="0.7"><stop offset="0" stop-color="#fff"/><stop offset="0.5" stop-color="#9a9a9a"/><stop offset="1" stop-color="#444"/></radialGradient>
  <linearGradient id="gpl" x1="0" y1="0" x2="1" y2="0"><stop offset="0" stop-color="#e8e9ea"/><stop offset="1" stop-color="#c4c5c7"/></linearGradient>
 </defs>
</svg>
<!-- CYLINDER -->
<svg width="1446" height="825" style="left:0;top:0">
 <defs>
  <linearGradient id="gbody" x1="888" y1="591" x2="1070" y2="692" gradientUnits="userSpaceOnUse">
   <stop offset="0" stop-color="#e99a12"/>
   <stop offset="0.2" stop-color="#f3a617"/>
   <stop offset="0.42" stop-color="#e69912"/>
   <stop offset="0.62" stop-color="#c98310"/>
   <stop offset="0.8" stop-color="#ad6e0d"/>
   <stop offset="0.92" stop-color="#9a5e0a"/>
   <stop offset="1" stop-color="#8e560a"/>
  </linearGradient>
  <linearGradient id="ggray" x1="-90" y1="-50" x2="80" y2="50" gradientUnits="userSpaceOnUse">
   <stop offset="0" stop-color="#454a45"/>
   <stop offset="0.5" stop-color="#6f746d"/>
   <stop offset="1" stop-color="#8d928a"/>
  </linearGradient>
  <pattern id="pdots" width="32" height="32" patternUnits="userSpaceOnUse"><g fill="#4a7a14" fill-opacity="0.6"><rect x="1.3" y="1.5" width="1.2" height="1.2"/><rect x="6.4" y="1.3" width="1.2" height="1.2"/><rect x="9.4" y="1.6" width="1.2" height="1.2"/><rect x="12.6" y="1.4" width="1.2" height="1.2"/><rect x="17.7" y="2.1" width="1.2" height="1.2"/><rect x="20.4" y="0.9" width="1.2" height="1.2"/><rect x="24.4" y="2.1" width="1.2" height="1.2"/><rect x="29.9" y="0.3" width="1.2" height="1.2"/><rect x="2.6" y="6.5" width="1.2" height="1.2"/><rect x="5.8" y="5.7" width="1.2" height="1.2"/><rect x="8.6" y="4.2" width="1.2" height="1.2"/><rect x="13.5" y="4.3" width="1.2" height="1.2"/><rect x="16.7" y="4.8" width="1.2" height="1.2"/><rect x="20.3" y="5.3" width="1.2" height="1.2"/><rect x="25.3" y="6.2" width="1.2" height="1.2"/><rect x="29.4" y="5.7" width="1.2" height="1.2"/><rect x="1.4" y="9.8" width="1.2" height="1.2"/><rect x="5.3" y="8.9" width="1.2" height="1.2"/><rect x="10.6" y="10.6" width="1.2" height="1.2"/><rect x="14.2" y="9.9" width="1.2" height="1.2"/><rect x="17.0" y="8.8" width="1.2" height="1.2"/><rect x="20.9" y="8.4" width="1.2" height="1.2"/><rect x="26.0" y="9.2" width="1.2" height="1.2"/><rect x="30.2" y="9.1" width="1.2" height="1.2"/><rect x="2.5" y="14.2" width="1.2" height="1.2"/><rect x="4.2" y="12.7" width="1.2" height="1.2"/><rect x="10.4" y="13.3" width="1.2" height="1.2"/><rect x="14.6" y="13.2" width="1.2" height="1.2"/><rect x="16.4" y="13.7" width="1.2" height="1.2"/><rect x="22.1" y="12.8" width="1.2" height="1.2"/><rect x="24.4" y="13.0" width="1.2" height="1.2"/><rect x="30.5" y="14.0" width="1.2" height="1.2"/><rect x="0.5" y="16.8" width="1.2" height="1.2"/><rect x="4.4" y="16.3" width="1.2" height="1.2"/><rect x="10.1" y="16.6" width="1.2" height="1.2"/><rect x="13.5" y="17.3" width="1.2" height="1.2"/><rect x="16.7" y="18.0" width="1.2" height="1.2"/><rect x="20.5" y="17.7" width="1.2" height="1.2"/><rect x="24.5" y="17.2" width="1.2" height="1.2"/><rect x="28.7" y="16.8" width="1.2" height="1.2"/><rect x="2.5" y="22.1" width="1.2" height="1.2"/><rect x="4.9" y="22.3" width="1.2" height="1.2"/><rect x="8.7" y="21.1" width="1.2" height="1.2"/><rect x="14.3" y="21.7" width="1.2" height="1.2"/><rect x="16.4" y="22.6" width="1.2" height="1.2"/><rect x="20.7" y="20.8" width="1.2" height="1.2"/><rect x="26.1" y="21.0" width="1.2" height="1.2"/><rect x="28.9" y="20.4" width="1.2" height="1.2"/><rect x="0.4" y="25.6" width="1.2" height="1.2"/><rect x="4.8" y="25.6" width="1.2" height="1.2"/><rect x="9.1" y="25.3" width="1.2" height="1.2"/><rect x="14.5" y="25.4" width="1.2" height="1.2"/><rect x="17.6" y="26.3" width="1.2" height="1.2"/><rect x="20.6" y="24.6" width="1.2" height="1.2"/><rect x="26.4" y="26.2" width="1.2" height="1.2"/><rect x="28.8" y="24.7" width="1.2" height="1.2"/><rect x="2.0" y="30.5" width="1.2" height="1.2"/><rect x="4.7" y="30.5" width="1.2" height="1.2"/><rect x="10.3" y="29.6" width="1.2" height="1.2"/><rect x="13.2" y="28.4" width="1.2" height="1.2"/><rect x="16.3" y="30.5" width="1.2" height="1.2"/><rect x="20.8" y="29.9" width="1.2" height="1.2"/><rect x="24.8" y="30.2" width="1.2" height="1.2"/><rect x="29.6" y="28.9" width="1.2" height="1.2"/></g></pattern>
  <pattern id="pdots2" width="32" height="32" patternUnits="userSpaceOnUse"><g fill="#6aa86a" fill-opacity="0.38"><rect x="0.6" y="1.9" width="1.2" height="1.2"/><rect x="4.4" y="0.7" width="1.2" height="1.2"/><rect x="9.5" y="2.2" width="1.2" height="1.2"/><rect x="13.7" y="0.9" width="1.2" height="1.2"/><rect x="18.4" y="0.7" width="1.2" height="1.2"/><rect x="20.2" y="0.8" width="1.2" height="1.2"/><rect x="25.3" y="0.3" width="1.2" height="1.2"/><rect x="28.6" y="1.1" width="1.2" height="1.2"/><rect x="1.6" y="4.5" width="1.2" height="1.2"/><rect x="5.1" y="6.3" width="1.2" height="1.2"/><rect x="10.6" y="5.8" width="1.2" height="1.2"/><rect x="13.9" y="5.6" width="1.2" height="1.2"/><rect x="16.5" y="4.3" width="1.2" height="1.2"/><rect x="20.2" y="6.4" width="1.2" height="1.2"/><rect x="25.9" y="6.5" width="1.2" height="1.2"/><rect x="28.3" y="5.7" width="1.2" height="1.2"/><rect x="1.4" y="10.0" width="1.2" height="1.2"/><rect x="5.0" y="10.6" width="1.2" height="1.2"/><rect x="8.4" y="9.5" width="1.2" height="1.2"/><rect x="14.0" y="10.4" width="1.2" height="1.2"/><rect x="18.0" y="9.9" width="1.2" height="1.2"/><rect x="22.1" y="10.4" width="1.2" height="1.2"/><rect x="25.0" y="9.8" width="1.2" height="1.2"/><rect x="30.4" y="10.3" width="1.2" height="1.2"/><rect x="1.2" y="14.1" width="1.2" height="1.2"/><rect x="6.3" y="13.6" width="1.2" height="1.2"/><rect x="9.7" y="13.1" width="1.2" height="1.2"/><rect x="13.6" y="13.7" width="1.2" height="1.2"/><rect x="16.4" y="13.7" width="1.2" height="1.2"/><rect x="22.6" y="14.3" width="1.2" height="1.2"/><rect x="25.9" y="13.1" width="1.2" height="1.2"/><rect x="30.0" y="13.6" width="1.2" height="1.2"/><rect x="1.3" y="18.2" width="1.2" height="1.2"/><rect x="4.4" y="18.0" width="1.2" height="1.2"/><rect x="8.3" y="17.6" width="1.2" height="1.2"/><rect x="13.4" y="16.8" width="1.2" height="1.2"/><rect x="17.9" y="17.4" width="1.2" height="1.2"/><rect x="21.7" y="18.4" width="1.2" height="1.2"/><rect x="24.8" y="16.2" width="1.2" height="1.2"/><rect x="28.9" y="17.8" width="1.2" height="1.2"/><rect x="0.7" y="20.6" width="1.2" height="1.2"/><rect x="6.4" y="21.8" width="1.2" height="1.2"/><rect x="9.3" y="22.3" width="1.2" height="1.2"/><rect x="13.0" y="21.8" width="1.2" height="1.2"/><rect x="16.7" y="21.2" width="1.2" height="1.2"/><rect x="22.1" y="22.4" width="1.2" height="1.2"/><rect x="26.3" y="21.1" width="1.2" height="1.2"/><rect x="29.6" y="21.0" width="1.2" height="1.2"/><rect x="0.5" y="25.4" width="1.2" height="1.2"/><rect x="6.2" y="26.2" width="1.2" height="1.2"/><rect x="9.9" y="26.5" width="1.2" height="1.2"/><rect x="12.9" y="24.6" width="1.2" height="1.2"/><rect x="17.3" y="24.9" width="1.2" height="1.2"/><rect x="20.7" y="25.2" width="1.2" height="1.2"/><rect x="25.7" y="25.4" width="1.2" height="1.2"/><rect x="29.0" y="26.2" width="1.2" height="1.2"/><rect x="2.6" y="29.3" width="1.2" height="1.2"/><rect x="4.4" y="28.3" width="1.2" height="1.2"/><rect x="10.3" y="28.3" width="1.2" height="1.2"/><rect x="13.9" y="29.6" width="1.2" height="1.2"/><rect x="16.9" y="30.1" width="1.2" height="1.2"/><rect x="20.2" y="28.5" width="1.2" height="1.2"/><rect x="25.3" y="28.3" width="1.2" height="1.2"/><rect x="30.2" y="28.8" width="1.2" height="1.2"/></g></pattern>
  <clipPath id="cinner"><ellipse cx="0" cy="0" rx="96" ry="56"/></clipPath>
   <linearGradient id="ggreen" x1="897" y1="596" x2="1062" y2="687" gradientUnits="userSpaceOnUse">
   <stop offset="0" stop-color="#5ab820" stop-opacity="0.35"/>
   <stop offset="0.12" stop-color="#7ab020" stop-opacity="0.15"/>
   <stop offset="0.3" stop-color="#7ab020" stop-opacity="0"/>
   <stop offset="0.85" stop-color="#6a9a18" stop-opacity="0"/>
   <stop offset="1" stop-color="#5aa818" stop-opacity="0.35"/>
  </linearGradient>
  <linearGradient id="ggray2" x1="965" y1="505" x2="1105" y2="565" gradientUnits="userSpaceOnUse">
   <stop offset="0" stop-color="#4c4e4a"/>
   <stop offset="0.45" stop-color="#6f706a"/>
   <stop offset="1" stop-color="#8d8e87"/>
  </linearGradient>
 </defs>
 <path d="M943.4,488.4 L944.7,486.3 L946.0,484.2 L947.5,482.2 L949.2,480.4 L951.0,478.6 L952.9,476.9 L954.9,475.3 L957.0,473.8 L959.3,472.4 L961.7,471.1 L964.2,469.9 L966.8,468.8 L969.5,467.8 L972.3,467.0 L975.2,466.2 L978.2,465.6 L981.2,465.0 L984.4,464.6 L987.6,464.3 L991.0,464.1 L994.3,464.0 L997.8,464.1 L1001.3,464.2 L1004.8,464.5 L1008.4,464.9 L1012.0,465.4 L1015.7,466.0 L1019.4,466.7 L1023.1,467.5 L1026.9,468.5 L1030.6,469.5 L1034.4,470.7 L1038.1,472.0 L1041.9,473.3 L1045.6,474.8 L1049.3,476.4 L1053.0,478.0 L1056.7,479.8 L1060.3,481.6 L1063.9,483.6 L1067.5,485.6 L1071.0,487.7 L1074.4,489.9 L1077.8,492.1 L1081.1,494.5 L1084.3,496.9 L1087.5,499.3 L1090.6,501.9 L1093.6,504.4 L1096.5,507.1 L1099.3,509.8 L1102.0,512.5 L1104.6,515.3 L1107.1,518.1 L1109.5,520.9 L1111.7,523.8 L1113.9,526.7 L1115.9,529.6 L1117.8,532.5 L1119.6,535.4 L1121.2,538.3 L1122.7,541.3 L1124.1,544.2 L1125.3,547.1 L1126.4,550.0 L1127.4,552.9 L1128.2,555.8 L1128.8,558.7 L1129.4,561.5 L1129.7,564.3 L1129.9,567.0 L1130.0,569.7 L1129.9,572.3 L1129.7,574.9 L1129.4,577.5 L1128.9,580.0 L1128.2,582.4 L1127.4,584.7 L1126.4,587.0 L1125.4,589.2 L1070.5,692.0 L1069.2,694.1 L1067.9,696.2 L1066.4,698.2 L1064.7,700.0 L1062.9,701.8 L1061.0,703.5 L1059.0,705.1 L1056.9,706.6 L1054.6,708.0 L1052.2,709.3 L1049.7,710.5 L1047.1,711.6 L1044.4,712.6 L1041.6,713.4 L1038.7,714.2 L1035.7,714.8 L1032.7,715.4 L1029.5,715.8 L1026.3,716.1 L1022.9,716.3 L1019.6,716.4 L1016.1,716.3 L1012.6,716.2 L1009.1,715.9 L1005.5,715.5 L1001.9,715.0 L998.2,714.4 L994.5,713.7 L990.8,712.9 L987.0,711.9 L983.3,710.9 L979.5,709.7 L975.8,708.4 L972.0,707.1 L968.3,705.6 L964.6,704.0 L960.9,702.4 L957.2,700.6 L953.6,698.8 L950.0,696.8 L946.4,694.8 L942.9,692.7 L939.5,690.5 L936.1,688.3 L932.8,685.9 L929.6,683.5 L926.4,681.1 L923.3,678.5 L920.3,676.0 L917.4,673.3 L914.6,670.6 L911.9,667.9 L909.3,665.1 L906.8,662.3 L904.4,659.5 L902.2,656.6 L900.0,653.7 L898.0,650.8 L896.1,647.9 L894.3,645.0 L892.7,642.1 L891.2,639.1 L889.8,636.2 L888.6,633.3 L887.5,630.4 L886.5,627.5 L885.7,624.6 L885.1,621.7 L884.5,618.9 L884.2,616.1 L884.0,613.4 L883.9,610.7 L884.0,608.1 L884.2,605.5 L884.5,602.9 L885.0,600.4 L885.7,598.0 L886.5,595.7 L887.5,593.4 L888.5,591.2 Z" fill="url(#gbody)"/>
 
 <path d="M952.2,493.2 L953.3,491.3 L954.5,489.4 L955.9,487.7 L957.4,486.0 L959.0,484.4 L960.7,482.8 L962.5,481.4 L964.4,480.0 L966.5,478.8 L968.6,477.6 L970.9,476.5 L973.3,475.5 L975.7,474.6 L978.2,473.9 L980.9,473.2 L983.6,472.6 L986.3,472.1 L989.2,471.7 L992.1,471.4 L995.1,471.3 L998.2,471.2 L1001.3,471.2 L1004.5,471.4 L1007.7,471.6 L1010.9,472.0 L1014.2,472.4 L1017.5,473.0 L1020.8,473.6 L1024.2,474.4 L1027.6,475.2 L1031.0,476.2 L1034.4,477.2 L1037.8,478.4 L1041.1,479.6 L1044.5,480.9 L1047.9,482.4 L1051.2,483.9 L1054.5,485.5 L1057.8,487.1 L1061.1,488.9 L1064.3,490.7 L1067.4,492.6 L1070.6,494.6 L1073.6,496.6 L1076.6,498.7 L1079.5,500.9 L1082.4,503.1 L1085.2,505.4 L1087.9,507.7 L1090.5,510.1 L1093.1,512.5 L1095.5,515.0 L1097.9,517.5 L1100.1,520.1 L1102.3,522.6 L1104.3,525.2 L1106.3,527.8 L1108.1,530.4 L1109.8,533.1 L1111.4,535.7 L1112.9,538.4 L1114.2,541.0 L1115.5,543.7 L1116.6,546.3 L1117.6,549.0 L1118.4,551.6 L1119.2,554.2 L1119.8,556.7 L1120.2,559.3 L1120.6,561.8 L1120.8,564.3 L1120.8,566.7 L1120.8,569.1 L1120.6,571.5 L1120.2,573.8 L1119.8,576.0 L1119.2,578.2 L1118.5,580.3 L1117.6,582.4 L1116.6,584.4 L1061.7,687.2 L1060.6,689.1 L1059.4,691.0 L1058.0,692.7 L1056.5,694.4 L1054.9,696.0 L1053.2,697.6 L1051.4,699.0 L1049.5,700.4 L1047.4,701.6 L1045.3,702.8 L1043.0,703.9 L1040.6,704.9 L1038.2,705.8 L1035.7,706.5 L1033.0,707.2 L1030.3,707.8 L1027.6,708.3 L1024.7,708.7 L1021.8,709.0 L1018.8,709.1 L1015.7,709.2 L1012.6,709.2 L1009.4,709.0 L1006.2,708.8 L1003.0,708.4 L999.7,708.0 L996.4,707.4 L993.1,706.8 L989.7,706.0 L986.3,705.2 L982.9,704.2 L979.5,703.2 L976.1,702.0 L972.8,700.8 L969.4,699.5 L966.0,698.0 L962.7,696.5 L959.4,694.9 L956.1,693.3 L952.8,691.5 L949.6,689.7 L946.5,687.8 L943.3,685.8 L940.3,683.8 L937.3,681.7 L934.4,679.5 L931.5,677.3 L928.7,675.0 L926.0,672.7 L923.4,670.3 L920.8,667.9 L918.4,665.4 L916.0,662.9 L913.8,660.3 L911.6,657.8 L909.6,655.2 L907.6,652.6 L905.8,650.0 L904.1,647.3 L902.5,644.7 L901.0,642.0 L899.7,639.4 L898.4,636.7 L897.3,634.1 L896.3,631.4 L895.5,628.8 L894.7,626.2 L894.1,623.7 L893.7,621.1 L893.3,618.6 L893.1,616.1 L893.1,613.7 L893.1,611.3 L893.3,608.9 L893.7,606.6 L894.1,604.4 L894.7,602.2 L895.4,600.1 L896.3,598.0 L897.3,596.0 Z" fill="url(#pdots)"/>
 <path d="M952.2,493.2 L953.3,491.3 L954.5,489.4 L955.9,487.7 L957.4,486.0 L959.0,484.4 L960.7,482.8 L962.5,481.4 L964.4,480.0 L966.5,478.8 L968.6,477.6 L970.9,476.5 L973.3,475.5 L975.7,474.6 L978.2,473.9 L980.9,473.2 L983.6,472.6 L986.3,472.1 L989.2,471.7 L992.1,471.4 L995.1,471.3 L998.2,471.2 L1001.3,471.2 L1004.5,471.4 L1007.7,471.6 L1010.9,472.0 L1014.2,472.4 L1017.5,473.0 L1020.8,473.6 L1024.2,474.4 L1027.6,475.2 L1031.0,476.2 L1034.4,477.2 L1037.8,478.4 L1041.1,479.6 L1044.5,480.9 L1047.9,482.4 L1051.2,483.9 L1054.5,485.5 L1057.8,487.1 L1061.1,488.9 L1064.3,490.7 L1067.4,492.6 L1070.6,494.6 L1073.6,496.6 L1076.6,498.7 L1079.5,500.9 L1082.4,503.1 L1085.2,505.4 L1087.9,507.7 L1090.5,510.1 L1093.1,512.5 L1095.5,515.0 L1097.9,517.5 L1100.1,520.1 L1102.3,522.6 L1104.3,525.2 L1106.3,527.8 L1108.1,530.4 L1109.8,533.1 L1111.4,535.7 L1112.9,538.4 L1114.2,541.0 L1115.5,543.7 L1116.6,546.3 L1117.6,549.0 L1118.4,551.6 L1119.2,554.2 L1119.8,556.7 L1120.2,559.3 L1120.6,561.8 L1120.8,564.3 L1120.8,566.7 L1120.8,569.1 L1120.6,571.5 L1120.2,573.8 L1119.8,576.0 L1119.2,578.2 L1118.5,580.3 L1117.6,582.4 L1116.6,584.4 L1061.7,687.2 L1060.6,689.1 L1059.4,691.0 L1058.0,692.7 L1056.5,694.4 L1054.9,696.0 L1053.2,697.6 L1051.4,699.0 L1049.5,700.4 L1047.4,701.6 L1045.3,702.8 L1043.0,703.9 L1040.6,704.9 L1038.2,705.8 L1035.7,706.5 L1033.0,707.2 L1030.3,707.8 L1027.6,708.3 L1024.7,708.7 L1021.8,709.0 L1018.8,709.1 L1015.7,709.2 L1012.6,709.2 L1009.4,709.0 L1006.2,708.8 L1003.0,708.4 L999.7,708.0 L996.4,707.4 L993.1,706.8 L989.7,706.0 L986.3,705.2 L982.9,704.2 L979.5,703.2 L976.1,702.0 L972.8,700.8 L969.4,699.5 L966.0,698.0 L962.7,696.5 L959.4,694.9 L956.1,693.3 L952.8,691.5 L949.6,689.7 L946.5,687.8 L943.3,685.8 L940.3,683.8 L937.3,681.7 L934.4,679.5 L931.5,677.3 L928.7,675.0 L926.0,672.7 L923.4,670.3 L920.8,667.9 L918.4,665.4 L916.0,662.9 L913.8,660.3 L911.6,657.8 L909.6,655.2 L907.6,652.6 L905.8,650.0 L904.1,647.3 L902.5,644.7 L901.0,642.0 L899.7,639.4 L898.4,636.7 L897.3,634.1 L896.3,631.4 L895.5,628.8 L894.7,626.2 L894.1,623.7 L893.7,621.1 L893.3,618.6 L893.1,616.1 L893.1,613.7 L893.1,611.3 L893.3,608.9 L893.7,606.6 L894.1,604.4 L894.7,602.2 L895.4,600.1 L896.3,598.0 L897.3,596.0 Z" fill="url(#ggreen)"/>
 <path d="M1061.3,687.9 L1060.2,689.8 L1058.9,691.6 L1057.5,693.4 L1056.0,695.0 L1054.3,696.6 L1052.6,698.1 L1050.7,699.5 L1048.7,700.9 L1046.6,702.1 L1044.4,703.2 L1042.1,704.3 L1039.8,705.2 L1037.3,706.1 L1034.7,706.8 L1032.1,707.5 L1029.3,708.0 L1026.5,708.4 L1023.6,708.8 L1020.7,709.0 L1017.7,709.2 L1014.6,709.2 L1011.5,709.1 L1008.3,708.9 L1005.1,708.7 L1001.8,708.3 L998.5,707.8 L995.2,707.2 L991.8,706.5 L988.5,705.7 L985.1,704.8 L981.7,703.8 L978.3,702.7 L974.9,701.6 L971.5,700.3 L968.1,698.9 L964.8,697.5 L961.4,696.0 L958.1,694.3 L954.9,692.6 L951.6,690.9 L948.4,689.0 L945.3,687.1 L942.2,685.1 L939.2,683.0 L936.2,680.9 L933.3,678.7 L930.5,676.4 L927.7,674.1 L925.0,671.8 L922.4,669.4 L919.9,666.9 L917.5,664.5 L915.2,662.0 L913.0,659.4 L910.9,656.8 L908.9,654.2 L907.0,651.6 L905.2,649.0 L903.5,646.3 L901.9,643.7 L900.5,641.0 L899.2,638.4 L898.0,635.7 L896.9,633.1 L896.0,630.5 L895.2,627.9 L894.5,625.3 L893.9,622.7 L893.5,620.2 L893.2,617.7 L893.1,615.2 L893.1,612.8 L893.2,610.4 L893.4,608.1 L893.8,605.8 L894.3,603.6 L895.0,601.4 L895.7,599.3 L896.6,597.3 L897.7,595.3 L898.8,593.4 L900.1,591.6 L901.5,589.8 L903.0,588.2 L904.7,586.6 L906.4,585.1 L908.3,583.7 L910.3,582.3 L912.4,581.1 L914.6,580.0 L916.9,578.9 L919.2,578.0 L921.7,577.1 L924.3,576.4 L926.9,575.7 L929.7,575.2 L932.5,574.8 L935.4,574.4 L938.3,574.2 L941.3,574.0 L944.4,574.0 L947.5,574.1 L950.7,574.3 L953.9,574.5 L957.2,574.9 L960.5,575.4 L963.8,576.0 L967.2,576.7 L970.5,577.5 L973.9,578.4 L977.3,579.4 L980.7,580.5 L984.1,581.6 L987.5,582.9 L990.9,584.3 L994.2,585.7 L997.6,587.2 L1000.9,588.9 L1004.1,590.6 L1007.4,592.3 L1010.6,594.2 L1013.7,596.1 L1016.8,598.1 L1019.8,600.2 L1022.8,602.3 L1025.7,604.5 L1028.5,606.8 L1031.3,609.1 L1034.0,611.4 L1036.6,613.8 L1039.1,616.3 L1041.5,618.7 L1043.8,621.2 L1046.0,623.8 L1048.1,626.4 L1050.1,629.0 L1052.0,631.6 L1053.8,634.2 L1055.5,636.9 L1057.1,639.5 L1058.5,642.2 L1059.8,644.8 L1061.0,647.5 L1062.1,650.1 L1063.0,652.7 L1063.8,655.3 L1064.5,657.9 L1065.1,660.5 L1065.5,663.0 L1065.8,665.5 L1065.9,668.0 L1065.9,670.4 L1065.8,672.8 L1065.6,675.1 L1065.2,677.4 L1064.7,679.6 L1064.0,681.8 L1063.3,683.9 L1062.4,685.9 L1061.3,687.9 Z" fill="none" stroke="#44c020" stroke-width="1.2"/>
 <path d="M952.2,493.2 L897.3,596.0 M1116.6,584.4 L1061.7,687.2" fill="none" stroke="#44c020" stroke-width="1.2"/>
 <path d="M943.4,488.4 L888.5,591.2" fill="none" stroke="#e89c12" stroke-width="1"/>
 <path d="M1125.4,589.2 L1070.5,692.0" fill="none" stroke="#6e4208" stroke-width="1.2"/>
 <path d="M885.1,621.7 L885.7,624.6 L886.5,627.5 L887.5,630.4 L888.6,633.3 L889.8,636.2 L891.2,639.1 L892.7,642.1 L894.3,645.0 L896.1,647.9 L898.0,650.8 L900.0,653.7 L902.2,656.6 L904.4,659.5 L906.8,662.3 L909.3,665.1 L911.9,667.9 L914.6,670.6 L917.4,673.3 L920.3,676.0 L923.3,678.5 L926.4,681.1 L929.6,683.5 L932.8,685.9 L936.1,688.3 L939.5,690.5 L942.9,692.7 L946.4,694.8 L950.0,696.8 L953.6,698.8 L957.2,700.6 L960.9,702.4 L964.6,704.0 L968.3,705.6 L972.0,707.1 L975.8,708.4 L979.5,709.7 L983.3,710.9 L987.0,711.9 L990.8,712.9 L994.5,713.7 L998.2,714.4 L1001.9,715.0 L1005.5,715.5 L1009.1,715.9 L1012.6,716.2 L1016.1,716.3 L1019.6,716.4 L1022.9,716.3 L1026.3,716.1 L1029.5,715.8 L1032.7,715.4 L1035.7,714.8 L1038.7,714.2 L1041.6,713.4 L1044.4,712.6 L1047.1,711.6 L1049.7,710.5 L1052.2,709.3 L1054.6,708.0 L1056.9,706.6 L1059.0,705.1 L1061.0,703.5 L1062.9,701.8 L1064.7,700.0 L1066.4,698.2 L1067.9,696.2 L1069.2,694.1 L1070.5,692.0 " fill="none" stroke="#1e1208" stroke-width="1.3"/>
 <path d="M1124.9,590.0 L1123.6,592.1 L1122.2,594.1 L1120.7,596.1 L1119.0,597.9 L1117.2,599.7 L1115.2,601.3 L1113.2,602.9 L1111.0,604.3 L1108.7,605.7 L1106.2,607.0 L1103.7,608.1 L1101.1,609.2 L1098.3,610.1 L1095.5,610.9 L1092.5,611.7 L1089.5,612.3 L1086.4,612.7 L1083.2,613.1 L1079.9,613.4 L1076.6,613.5 L1073.2,613.6 L1069.7,613.5 L1066.2,613.3 L1062.7,613.0 L1059.1,612.6 L1055.4,612.0 L1051.7,611.4 L1048.0,610.6 L1044.3,609.7 L1040.6,608.7 L1036.8,607.6 L1033.1,606.4 L1029.3,605.1 L1025.6,603.7 L1021.8,602.2 L1018.1,600.6 L1014.4,598.9 L1010.8,597.1 L1007.2,595.3 L1003.6,593.3 L1000.0,591.2 L996.6,589.1 L993.1,586.9 L989.8,584.6 L986.5,582.2 L983.3,579.8 L980.2,577.3 L977.1,574.8 L974.2,572.2 L971.3,569.5 L968.5,566.8 L965.8,564.1 L963.3,561.3 L960.8,558.5 L958.5,555.7 L956.3,552.8 L954.2,549.9 L952.2,547.0 L950.3,544.0 L948.6,541.1 L947.0,538.2 L945.6,535.2 L944.2,532.3 L943.1,529.4 L942.0,526.5 L941.1,523.6 L940.4,520.7 L939.8,517.9 L939.3,515.1 L939.0,512.3 L938.8,509.6 L938.8,506.9 L938.9,504.3 L939.2,501.7 L939.6,499.2 L940.2,496.7 L940.9,494.3 L941.7,492.0 L942.7,489.8 L943.9,487.6 L945.2,485.5 L946.6,483.5 L948.1,481.5 L949.8,479.7 L951.6,477.9 L953.6,476.3 L955.6,474.7 L957.8,473.3 L960.1,471.9 L962.6,470.6 L965.1,469.5 L967.7,468.4 L970.5,467.5 L973.3,466.7 L976.3,465.9 L979.3,465.3 L982.4,464.9 L985.6,464.5 L988.9,464.2 L992.2,464.1 L995.6,464.0 L999.1,464.1 L1002.6,464.3 L1006.1,464.6 L1009.7,465.0 L1013.4,465.6 L1017.1,466.2 L1020.8,467.0 L1024.5,467.9 L1028.2,468.9 L1032.0,470.0 L1035.7,471.2 L1039.5,472.5 L1043.2,473.9 L1047.0,475.4 L1050.7,477.0 L1054.4,478.7 L1058.0,480.5 L1061.6,482.3 L1065.2,484.3 L1068.8,486.4 L1072.2,488.5 L1075.7,490.7 L1079.0,493.0 L1082.3,495.4 L1085.5,497.8 L1088.6,500.3 L1091.7,502.8 L1094.6,505.4 L1097.5,508.1 L1100.3,510.8 L1103.0,513.5 L1105.5,516.3 L1108.0,519.1 L1110.3,521.9 L1112.5,524.8 L1114.6,527.7 L1116.6,530.6 L1118.5,533.6 L1120.2,536.5 L1121.8,539.4 L1123.2,542.4 L1124.6,545.3 L1125.7,548.2 L1126.8,551.1 L1127.7,554.0 L1128.4,556.9 L1129.0,559.7 L1129.5,562.5 L1129.8,565.3 L1130.0,568.0 L1130.0,570.7 L1129.9,573.3 L1129.6,575.9 L1129.2,578.4 L1128.6,580.9 L1127.9,583.3 L1127.1,585.6 L1126.1,587.8 L1124.9,590.0 Z" fill="#e59c0e" stroke="#1e1208" stroke-width="1.3"/>
 <path d="M1116.2,585.1 L1115.1,587.0 L1113.8,588.8 L1112.4,590.6 L1110.9,592.2 L1109.2,593.8 L1107.5,595.3 L1105.6,596.7 L1103.6,598.1 L1101.5,599.3 L1099.3,600.4 L1097.0,601.5 L1094.7,602.4 L1092.2,603.3 L1089.6,604.0 L1087.0,604.7 L1084.2,605.2 L1081.4,605.6 L1078.5,606.0 L1075.6,606.2 L1072.6,606.4 L1069.5,606.4 L1066.4,606.3 L1063.2,606.1 L1060.0,605.9 L1056.7,605.5 L1053.4,605.0 L1050.1,604.4 L1046.7,603.7 L1043.4,602.9 L1040.0,602.0 L1036.6,601.0 L1033.2,599.9 L1029.8,598.8 L1026.4,597.5 L1023.0,596.1 L1019.7,594.7 L1016.3,593.2 L1013.0,591.5 L1009.8,589.8 L1006.5,588.1 L1003.3,586.2 L1000.2,584.3 L997.1,582.3 L994.1,580.2 L991.1,578.1 L988.2,575.9 L985.4,573.6 L982.6,571.3 L979.9,569.0 L977.3,566.6 L974.8,564.1 L972.4,561.7 L970.1,559.2 L967.9,556.6 L965.8,554.0 L963.8,551.4 L961.9,548.8 L960.1,546.2 L958.4,543.5 L956.8,540.9 L955.4,538.2 L954.1,535.6 L952.9,532.9 L951.8,530.3 L950.9,527.7 L950.1,525.1 L949.4,522.5 L948.8,519.9 L948.4,517.4 L948.1,514.9 L948.0,512.4 L948.0,510.0 L948.1,507.6 L948.3,505.3 L948.7,503.0 L949.2,500.8 L949.9,498.6 L950.6,496.5 L951.5,494.5 L952.6,492.5 L953.7,490.6 L955.0,488.8 L956.4,487.0 L957.9,485.4 L959.6,483.8 L961.3,482.3 L963.2,480.9 L965.2,479.5 L967.3,478.3 L969.5,477.2 L971.8,476.1 L974.1,475.2 L976.6,474.3 L979.2,473.6 L981.8,472.9 L984.6,472.4 L987.4,472.0 L990.3,471.6 L993.2,471.4 L996.2,471.2 L999.3,471.2 L1002.4,471.3 L1005.6,471.5 L1008.8,471.7 L1012.1,472.1 L1015.4,472.6 L1018.7,473.2 L1022.1,473.9 L1025.4,474.7 L1028.8,475.6 L1032.2,476.6 L1035.6,477.7 L1039.0,478.8 L1042.4,480.1 L1045.8,481.5 L1049.1,482.9 L1052.5,484.4 L1055.8,486.1 L1059.0,487.8 L1062.3,489.5 L1065.5,491.4 L1068.6,493.3 L1071.7,495.3 L1074.7,497.4 L1077.7,499.5 L1080.6,501.7 L1083.4,504.0 L1086.2,506.3 L1088.9,508.6 L1091.5,511.0 L1094.0,513.5 L1096.4,515.9 L1098.7,518.4 L1100.9,521.0 L1103.0,523.6 L1105.0,526.2 L1106.9,528.8 L1108.7,531.4 L1110.4,534.1 L1112.0,536.7 L1113.4,539.4 L1114.7,542.0 L1115.9,544.7 L1117.0,547.3 L1117.9,549.9 L1118.7,552.5 L1119.4,555.1 L1120.0,557.7 L1120.4,560.2 L1120.7,562.7 L1120.8,565.2 L1120.8,567.6 L1120.7,570.0 L1120.5,572.3 L1120.1,574.6 L1119.6,576.8 L1118.9,579.0 L1118.2,581.1 L1117.3,583.1 L1116.2,585.1 Z" fill="url(#ggray2)"/>
 <path d="M1116.2,585.1 L1115.1,587.0 L1113.8,588.8 L1112.4,590.6 L1110.9,592.2 L1109.2,593.8 L1107.5,595.3 L1105.6,596.7 L1103.6,598.1 L1101.5,599.3 L1099.3,600.4 L1097.0,601.5 L1094.7,602.4 L1092.2,603.3 L1089.6,604.0 L1087.0,604.7 L1084.2,605.2 L1081.4,605.6 L1078.5,606.0 L1075.6,606.2 L1072.6,606.4 L1069.5,606.4 L1066.4,606.3 L1063.2,606.1 L1060.0,605.9 L1056.7,605.5 L1053.4,605.0 L1050.1,604.4 L1046.7,603.7 L1043.4,602.9 L1040.0,602.0 L1036.6,601.0 L1033.2,599.9 L1029.8,598.8 L1026.4,597.5 L1023.0,596.1 L1019.7,594.7 L1016.3,593.2 L1013.0,591.5 L1009.8,589.8 L1006.5,588.1 L1003.3,586.2 L1000.2,584.3 L997.1,582.3 L994.1,580.2 L991.1,578.1 L988.2,575.9 L985.4,573.6 L982.6,571.3 L979.9,569.0 L977.3,566.6 L974.8,564.1 L972.4,561.7 L970.1,559.2 L967.9,556.6 L965.8,554.0 L963.8,551.4 L961.9,548.8 L960.1,546.2 L958.4,543.5 L956.8,540.9 L955.4,538.2 L954.1,535.6 L952.9,532.9 L951.8,530.3 L950.9,527.7 L950.1,525.1 L949.4,522.5 L948.8,519.9 L948.4,517.4 L948.1,514.9 L948.0,512.4 L948.0,510.0 L948.1,507.6 L948.3,505.3 L948.7,503.0 L949.2,500.8 L949.9,498.6 L950.6,496.5 L951.5,494.5 L952.6,492.5 L953.7,490.6 L955.0,488.8 L956.4,487.0 L957.9,485.4 L959.6,483.8 L961.3,482.3 L963.2,480.9 L965.2,479.5 L967.3,478.3 L969.5,477.2 L971.8,476.1 L974.1,475.2 L976.6,474.3 L979.2,473.6 L981.8,472.9 L984.6,472.4 L987.4,472.0 L990.3,471.6 L993.2,471.4 L996.2,471.2 L999.3,471.2 L1002.4,471.3 L1005.6,471.5 L1008.8,471.7 L1012.1,472.1 L1015.4,472.6 L1018.7,473.2 L1022.1,473.9 L1025.4,474.7 L1028.8,475.6 L1032.2,476.6 L1035.6,477.7 L1039.0,478.8 L1042.4,480.1 L1045.8,481.5 L1049.1,482.9 L1052.5,484.4 L1055.8,486.1 L1059.0,487.8 L1062.3,489.5 L1065.5,491.4 L1068.6,493.3 L1071.7,495.3 L1074.7,497.4 L1077.7,499.5 L1080.6,501.7 L1083.4,504.0 L1086.2,506.3 L1088.9,508.6 L1091.5,511.0 L1094.0,513.5 L1096.4,515.9 L1098.7,518.4 L1100.9,521.0 L1103.0,523.6 L1105.0,526.2 L1106.9,528.8 L1108.7,531.4 L1110.4,534.1 L1112.0,536.7 L1113.4,539.4 L1114.7,542.0 L1115.9,544.7 L1117.0,547.3 L1117.9,549.9 L1118.7,552.5 L1119.4,555.1 L1120.0,557.7 L1120.4,560.2 L1120.7,562.7 L1120.8,565.2 L1120.8,567.6 L1120.7,570.0 L1120.5,572.3 L1120.1,574.6 L1119.6,576.8 L1118.9,579.0 L1118.2,581.1 L1117.3,583.1 L1116.2,585.1 Z" fill="url(#pdots2)"/>
 <path d="M1116.2,585.1 L1115.1,587.0 L1113.8,588.8 L1112.4,590.6 L1110.9,592.2 L1109.2,593.8 L1107.5,595.3 L1105.6,596.7 L1103.6,598.1 L1101.5,599.3 L1099.3,600.4 L1097.0,601.5 L1094.7,602.4 L1092.2,603.3 L1089.6,604.0 L1087.0,604.7 L1084.2,605.2 L1081.4,605.6 L1078.5,606.0 L1075.6,606.2 L1072.6,606.4 L1069.5,606.4 L1066.4,606.3 L1063.2,606.1 L1060.0,605.9 L1056.7,605.5 L1053.4,605.0 L1050.1,604.4 L1046.7,603.7 L1043.4,602.9 L1040.0,602.0 L1036.6,601.0 L1033.2,599.9 L1029.8,598.8 L1026.4,597.5 L1023.0,596.1 L1019.7,594.7 L1016.3,593.2 L1013.0,591.5 L1009.8,589.8 L1006.5,588.1 L1003.3,586.2 L1000.2,584.3 L997.1,582.3 L994.1,580.2 L991.1,578.1 L988.2,575.9 L985.4,573.6 L982.6,571.3 L979.9,569.0 L977.3,566.6 L974.8,564.1 L972.4,561.7 L970.1,559.2 L967.9,556.6 L965.8,554.0 L963.8,551.4 L961.9,548.8 L960.1,546.2 L958.4,543.5 L956.8,540.9 L955.4,538.2 L954.1,535.6 L952.9,532.9 L951.8,530.3 L950.9,527.7 L950.1,525.1 L949.4,522.5 L948.8,519.9 L948.4,517.4 L948.1,514.9 L948.0,512.4 L948.0,510.0 L948.1,507.6 L948.3,505.3 L948.7,503.0 L949.2,500.8 L949.9,498.6 L950.6,496.5 L951.5,494.5 L952.6,492.5 L953.7,490.6 L955.0,488.8 L956.4,487.0 L957.9,485.4 L959.6,483.8 L961.3,482.3 L963.2,480.9 L965.2,479.5 L967.3,478.3 L969.5,477.2 L971.8,476.1 L974.1,475.2 L976.6,474.3 L979.2,473.6 L981.8,472.9 L984.6,472.4 L987.4,472.0 L990.3,471.6 L993.2,471.4 L996.2,471.2 L999.3,471.2 L1002.4,471.3 L1005.6,471.5 L1008.8,471.7 L1012.1,472.1 L1015.4,472.6 L1018.7,473.2 L1022.1,473.9 L1025.4,474.7 L1028.8,475.6 L1032.2,476.6 L1035.6,477.7 L1039.0,478.8 L1042.4,480.1 L1045.8,481.5 L1049.1,482.9 L1052.5,484.4 L1055.8,486.1 L1059.0,487.8 L1062.3,489.5 L1065.5,491.4 L1068.6,493.3 L1071.7,495.3 L1074.7,497.4 L1077.7,499.5 L1080.6,501.7 L1083.4,504.0 L1086.2,506.3 L1088.9,508.6 L1091.5,511.0 L1094.0,513.5 L1096.4,515.9 L1098.7,518.4 L1100.9,521.0 L1103.0,523.6 L1105.0,526.2 L1106.9,528.8 L1108.7,531.4 L1110.4,534.1 L1112.0,536.7 L1113.4,539.4 L1114.7,542.0 L1115.9,544.7 L1117.0,547.3 L1117.9,549.9 L1118.7,552.5 L1119.4,555.1 L1120.0,557.7 L1120.4,560.2 L1120.7,562.7 L1120.8,565.2 L1120.8,567.6 L1120.7,570.0 L1120.5,572.3 L1120.1,574.6 L1119.6,576.8 L1118.9,579.0 L1118.2,581.1 L1117.3,583.1 L1116.2,585.1 Z" fill="none" stroke="#36b418" stroke-width="1.4"/>
 <!-- dimension -->
 <rect x="831" y="593" width="54" height="26" fill="#f3f4f6"/>
 <g fill="none" stroke="#22223e" stroke-width="1.25">
  <path d="M838.8,602.5 C839.2,599.3 845.6,598.8 845.6,602.6 C845.6,605.5 838.8,609.8 838.6,613 H846.4"/>
  <ellipse cx="861" cy="606" rx="3.7" ry="6.8"/>
  <ellipse cx="873" cy="606" rx="3.7" ry="6.8"/>
 </g>
 <rect x="850.3" y="611.4" width="1.8" height="1.8" fill="#22223e"/>
 <path d="M801.5,606.5 H831 M801.5,606.5 L866,643.5 M861.5,646 L889,593 M870,650 L896.7,598.6" fill="none" stroke="#2c1c58" stroke-width="1.1"/>
 <path d="M862,641 L872,647" stroke="#2c1c58" stroke-width="2.4"/>
 <path d="M884,586 L856,571" stroke="#c050e0" stroke-width="3.2"/>
 <path d="M847,566 L862,566 L856,578 Z" fill="#c050e0"/>
 <circle cx="890.4" cy="590" r="6.6" fill="#f2c21c" stroke="#a58a2a" stroke-width="1.4"/>
 <!-- red arrows -->
 <path d="M111,140 L128,142.5 L123.2,146.2 L225.4,230.2 L224.6,230.9 L120.2,149.6 L116.5,155 Z" fill="#ef3434"/>
 <path d="M334.2,120 L335.5,103 L339.9,106.3 L362.5,73.1 L363.5,73.7 L344.2,108.9 L348.5,111.5 Z" fill="#ef3434"/>
 <!-- watermark -->
 <text x="1019" y="808" font-family="Liberation Sans" font-size="23" fill="#a9aaae" textLength="283" lengthAdjust="spacingAndGlyphs">dooooit@dooooit_7000005</text>
</svg>
</body></html>
